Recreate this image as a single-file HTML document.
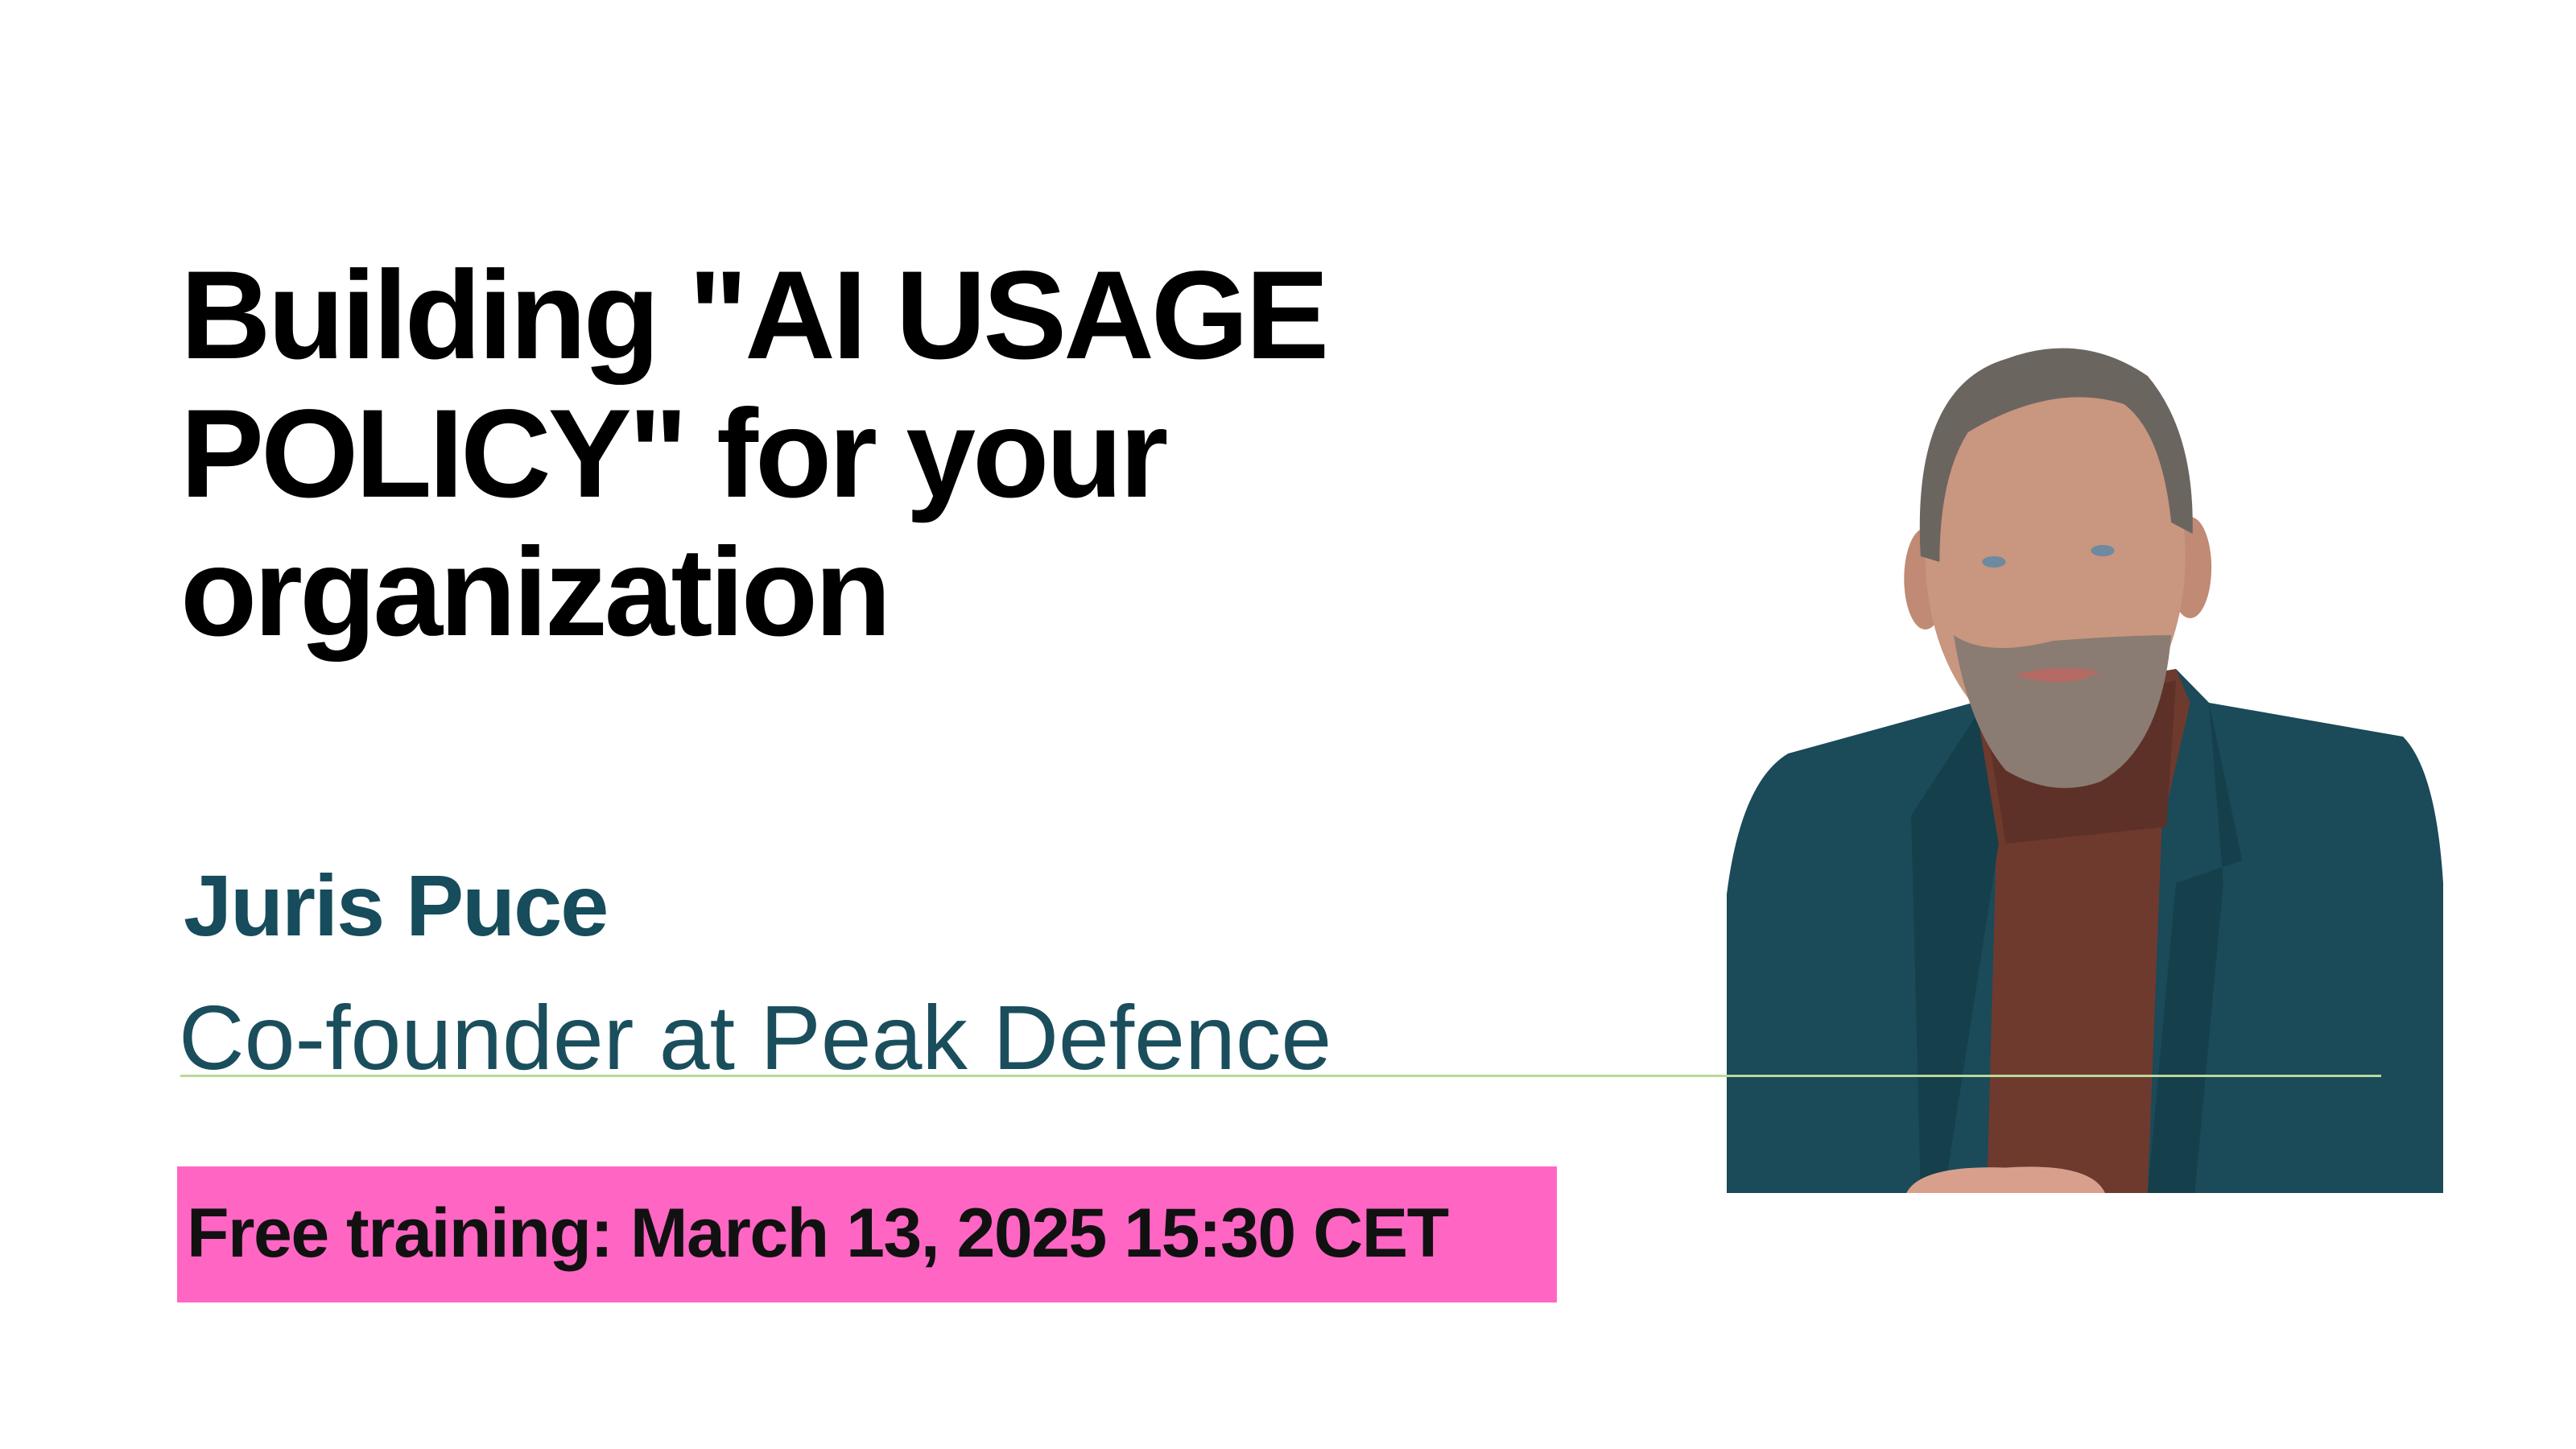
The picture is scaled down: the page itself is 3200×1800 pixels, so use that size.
<!DOCTYPE html>
<html><head><meta charset="utf-8"><style>
html,body{margin:0;padding:0;background:#fff;}
body{width:3200px;height:1800px;position:relative;overflow:hidden;font-family:"Liberation Sans",sans-serif;}
.t{position:absolute;white-space:nowrap;}
#title{left:224px;top:306px;font-size:156px;line-height:172px;font-weight:bold;color:#000;letter-spacing:-4px;}
#name{left:228px;top:1071px;font-size:108px;line-height:108px;font-weight:bold;color:#164c5c;letter-spacing:-2px;}
#role{left:222px;top:1233px;font-size:113px;line-height:113px;color:#1b4e5d;letter-spacing:0px;}
#line{position:absolute;left:224px;top:1335px;width:2734px;height:3px;background:#b9d99a;z-index:3;}
#box{position:absolute;left:220px;top:1449px;width:1714px;height:169px;background:#ff66c4;}
#box span{position:absolute;left:12px;top:40px;font-size:86px;line-height:86px;font-weight:bold;color:#111;letter-spacing:-1.5px;white-space:nowrap;}
svg{position:absolute;left:2145px;top:418px;}
</style></head><body>
<div class="t" id="title">Building "AI USAGE<br>POLICY" for your<br>organization</div>
<div class="t" id="name">Juris Puce</div>
<div class="t" id="role">Co-founder at Peak Defence</div>
<svg width="890" height="1064" viewBox="10 30 1515 1520" preserveAspectRatio="none">
<path d="M10,1550 L10,1020 Q40,820 140,770 L530,680 L960,620 L1030,680 L1440,740 Q1510,800 1525,1000 L1525,1550 Z" fill="#1b4a59"/>
<path d="M540,700 L960,620 L990,680 L930,900 L900,1550 L560,1550 L580,930 Z" fill="#6e3a2e"/>
<path d="M560,720 L960,640 L940,900 L600,930 Z" fill="#5e3128"/>
<path d="M400,880 L540,700 L585,930 L470,1550 L420,1550 Z" fill="#163f4c"/>
<path d="M1030,680 L1100,960 L960,1000 L900,1550 L1000,1550 L1060,1000 Z" fill="#163f4c"/>
<ellipse cx="430" cy="460" rx="45" ry="90" fill="#c08a74"/>
<ellipse cx="990" cy="440" rx="45" ry="90" fill="#c08a74"/>
<ellipse cx="705" cy="420" rx="275" ry="340" fill="#c9967f"/>
<path d="M420,420 Q400,120 600,70 Q760,20 900,100 Q1000,200 995,380 L950,360 Q930,200 850,150 Q700,110 520,200 Q460,280 460,430 Z" fill="#6b6560"/>
<path d="M490,560 Q560,600 700,570 Q860,560 950,560 Q930,760 800,820 Q700,850 600,800 Q520,720 490,560 Z" fill="#8a7c72"/>
<path d="M620,630 Q710,610 800,625 Q720,660 620,630 Z" fill="#b56a64"/>
<ellipse cx="575" cy="430" rx="25" ry="10" fill="#6d8aa0"/>
<ellipse cx="805" cy="410" rx="25" ry="10" fill="#6d8aa0"/>
<path d="M390,1550 Q420,1500 600,1505 Q780,1495 810,1550 Z" fill="#d8a08c"/>
</svg>
<div id="line"></div>
<div id="box"><span>Free training: March 13, 2025 15:30 CET</span></div>
</body></html>
